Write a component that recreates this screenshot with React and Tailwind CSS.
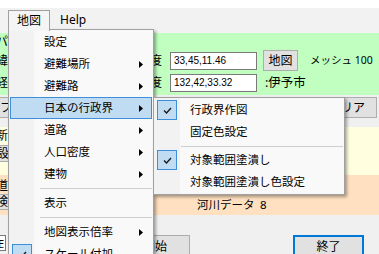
import React from "react";

const Check = () => (
  <span className="ml-[1px] w-[20px] h-[20px] bg-[#c0dcf3] border border-[#3d8fd9] flex items-center justify-center shrink-0">
    <svg width="9" height="7" viewBox="0 0 9 7">
      <path d="M1 3.5 L3.5 6 L8 1" fill="none" stroke="#1a1a1a" strokeWidth="1.4" />
    </svg>
  </span>
);

const Arrow = () => (
  <svg width="4" height="7" viewBox="0 0 4 7" className="ml-auto mr-[8px] shrink-0">
    <path d="M0 0 L4 3.5 L0 7 Z" fill="#000" />
  </svg>
);

const mainItems = [
  { t: "設定" },
  { t: "避難場所", sub: true },
  { t: "避難路", sub: true },
  { t: "日本の行政界", sub: true, hot: true },
  { t: "道路", sub: true },
  { t: "人口密度", sub: true },
  { t: "建物", sub: true },
  { sep: true },
  { t: "表示" },
  { sep: true },
  { t: "地図表示倍率", sub: true },
  { t: "スケール付加", check: true },
];

const subItems = [
  { t: "行政界作図", check: true },
  { t: "固定色設定" },
  { sep: true },
  { t: "対象範囲塗潰し", check: true },
  { t: "対象範囲塗潰し色設定" },
];

function MenuItem({ item, textGap }) {
  return (
    <div
      className={`h-[22px] flex items-center border text-[11.5px] leading-none text-black ${
        item.hot ? "bg-[#c0dcf3] border-[#3d8fd9]" : "border-transparent"
      }`}
    >
      {item.check ? <Check /> : <span className="w-[21px] shrink-0" />}
      <span className={textGap}>{item.t}</span>
      {item.sub && <Arrow />}
    </div>
  );
}

export default function App() {
  return (
    <div className="w-[379px] h-[254px] relative overflow-hidden bg-[#f0f0f0] font-['Noto_Sans','Noto_Sans_CJK_JP',sans-serif] text-black">
      <div className="h-[8px] bg-white" />

      {/* menu bar */}
      <div className="h-[25px] flex items-start pt-[2px] bg-[#f2f2f2]">
        <div className="relative z-20 ml-[8px] w-[42px] h-[21px] border border-b-0 border-[#a0a0a0] bg-[#f5f5f5] flex items-center justify-center text-[12px] leading-none">
          地図
        </div>
        <div className="ml-[10px] h-[20px] flex items-center text-[12px] leading-none">
          Help
        </div>
      </div>

      {/* green search panel */}
      <div className="h-[62px] bg-[#c0ffc0] flex flex-col">
        <div className="h-[17px] flex items-center -ml-[4px] text-[12px] leading-none">
          パラメータ
        </div>
        <div className="h-[21px] flex items-center">
          <div className="w-[166px] -ml-[4px] flex justify-between text-[12px] leading-none">
            <span>緯度</span>
            <span>緯度</span>
          </div>
          <div className="ml-[8px] w-[87px] h-[18px] bg-white border border-[#7a7a7a] pl-[3px] flex items-center font-['Liberation_Sans',sans-serif] text-[10px] leading-none">
            33,45,11.46
          </div>
          <div className="ml-[6px] w-[35px] h-[21px] bg-[#e1e1e1] border border-[#adadad] flex items-center justify-center text-[12px] leading-none">
            地図
          </div>
          <div className="ml-[12px] text-[10.5px] leading-none">メッシュ 100</div>
        </div>
        <div className="mt-[3px] h-[18px] flex items-center">
          <div className="w-[166px] -ml-[4px] flex justify-between text-[12px] leading-none">
            <span>経度</span>
            <span>経度</span>
          </div>
          <div className="ml-[8px] w-[87px] h-[18px] bg-white border border-[#7a7a7a] pl-[3px] flex items-center font-['Liberation_Sans',sans-serif] text-[10px] leading-none">
            132,42,33.32
          </div>
          <div className="ml-[8px] text-[12.5px] leading-none">:伊予市</div>
        </div>
      </div>

      {/* button row */}
      <div className="h-[32px] pt-[2px] flex items-start">
        <div className="-ml-[6px] w-[80px] h-[21px] bg-[#e1e1e1] border border-[#adadad] pl-[5px] flex items-center text-[12px] leading-none">
          ファイル
        </div>
        <div className="ml-auto mr-[2px] w-[60px] h-[21px] bg-[#e1e1e1] border border-[#adadad] flex items-center justify-center text-[12px] leading-none">
          クリア
        </div>
      </div>

      {/* yellow panel */}
      <div className="h-[48px] bg-[#ffffe0] flex flex-col">
        <div className="h-[18px] -ml-[4px] flex items-center text-[12px] leading-none">新規</div>
        <div className="h-[17px] w-[60px] -ml-[6px] bg-[#e1e1e1] border border-[#adadad] pl-[2px] flex items-center text-[12px] leading-none">
          設定
        </div>
      </div>

      {/* peach panel */}
      <div className="h-[40px] bg-[#ffe0c0] flex">
        <div className="w-[60px] -ml-[4px] flex flex-col pt-[3px]">
          <div className="h-[16px] flex items-center text-[12px] leading-none">道路</div>
          <div className="h-[16px] w-[60px] -ml-[2px] bg-[#e1e1e1] border border-[#adadad] pl-[1px] flex items-center text-[12px] leading-none">
            検索
          </div>
        </div>
        <div className="ml-[141px] pt-[7px] flex flex-col text-[11.5px] leading-none">
          <div className="h-[15px] flex items-center">
            <span className="w-[63px]">道路データ</span>
            <span>441</span>
          </div>
          <div className="h-[15px] flex items-center">
            <span className="w-[63px]">河川データ</span>
            <span>8</span>
          </div>
        </div>
      </div>

      {/* bottom */}
      <div className="pt-[20px] flex items-start">
        <div className="-ml-[14px] w-[20px] h-[16px] bg-white border border-[#7a7a7a] flex items-center justify-end pr-[1px] text-[11px] leading-none">
          E
        </div>
        <div className="ml-[114px] w-[70px] h-[24px] bg-[#e1e1e1] border border-[#adadad] flex items-center justify-center text-[12px] leading-none">
          開始
        </div>
        <div className="ml-[103px] w-[71px] h-[24px] bg-[#e1e1e1] border-2 border-[#0078d7] flex items-center justify-center text-[12px] leading-none">
          終了
        </div>
      </div>

      {/* dropdown menu */}
      <div className="absolute z-10 left-[8px] top-[29px] w-[146px] h-[240px] bg-[#f9f9f9] border border-[#a0a0a0] p-px shadow-[2px_2px_3px_rgba(0,0,0,0.35)]">
        <div className="absolute left-0 top-0 bottom-0 w-[25px] bg-[#f2f2f2]" />
        <div className="relative">
          {mainItems.map((item, i) =>
            item.sep ? (
              <div key={i} className="h-[7px] flex items-center pl-[30px]">
                <div className="h-px w-full bg-[#cfcfcf]" />
              </div>
            ) : (
              <MenuItem key={i} item={item} textGap="ml-[12px]" />
            )
          )}
        </div>
      </div>

      {/* submenu */}
      <div className="absolute z-30 left-[153px] top-[97px] w-[192px] bg-[#f9f9f9] border border-[#a0a0a0] p-px shadow-[2px_2px_3px_rgba(0,0,0,0.35)]">
        <div className="absolute left-0 top-0 bottom-0 w-[26px] bg-[#f2f2f2]" />
        <div className="relative">
          {subItems.map((item, i) =>
            item.sep ? (
              <div key={i} className="h-[6px] flex items-center pl-[26px]">
                <div className="h-px w-full bg-[#cfcfcf]" />
              </div>
            ) : (
              <MenuItem key={i} item={item} textGap="ml-[13px]" />
            )
          )}
        </div>
      </div>
    </div>
  );
}
